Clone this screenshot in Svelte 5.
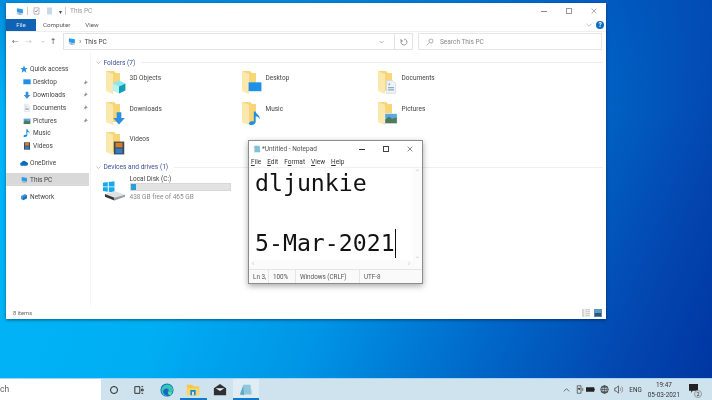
<script>
	const quick = [
		{ name: 'Desktop', icon: 'desktop' },
		{ name: 'Downloads', icon: 'downloads' },
		{ name: 'Documents', icon: 'documents' },
		{ name: 'Pictures', icon: 'pictures' }
	];
	const libs = [
		{ name: 'Music', icon: 'music' },
		{ name: 'Videos', icon: 'videos' }
	];
	const folders = [
		{ name: '3D Objects', icon: 'objects' },
		{ name: 'Desktop', icon: 'desktop' },
		{ name: 'Documents', icon: 'documents' },
		{ name: 'Downloads', icon: 'downloads' },
		{ name: 'Music', icon: 'music' },
		{ name: 'Pictures', icon: 'pictures' },
		{ name: 'Videos', icon: 'videos' }
	];
</script>

{#snippet glyph(kind)}
	{#if kind === 'desktop'}
		<path d="M1 4h22v15H1z" fill="#1e90ea" />
		<path d="M1 19h22v2H1z" fill="#d5e6f2" />
	{:else if kind === 'downloads'}
		<path d="M8 2h8v10h6L12 23 2 12h6z" fill="#2f8fe0" />
	{:else if kind === 'documents'}
		<path d="M4 1h11l5 5v17H4z" fill="#eef2f5" stroke="#c9d2d8" />
		<path d="M7 12h10v2H7zM7 16h10v2H7z" fill="#8fa9bd" />
		<path d="M8 5l3 2-3 3z" fill="#5aa5e0" />
	{:else if kind === 'pictures'}
		<path d="M1 4h22v18H1z" fill="#e8f3fa" />
		<path d="M2 5h20v8H2z" fill="#5aa8e0" />
		<path d="M2 14l6-4 6 3 8-2v10H2z" fill="#4d7a5a" />
	{:else if kind === 'music'}
		<path d="M10 1h3c1 5 8 6 7 13-1-3-4-5-7-5v10c0 3-3 5-7 5s-5-2-4-4 5-3 8-2z" fill="#1b8fe6" />
	{:else if kind === 'videos'}
		<path d="M3 1h18v22H3z" fill="#3f4a52" />
		<path d="M6 3h12v8H6z" fill="#d97b2f" />
		<path d="M6 13h12v8H6z" fill="#2f7fc8" />
	{:else if kind === 'objects'}
		<path d="M12 1l11 5-11 5L1 6z" fill="#8ce8ee" />
		<path d="M1 6l11 5v12L1 18z" fill="#bdf2f4" />
		<path d="M23 6l-11 5v12l11-5z" fill="#0f9fb5" />
	{/if}
{/snippet}

{#snippet small(kind)}
	<svg class="nav-icon" viewBox="0 0 24 24">{@render glyph(kind)}</svg>
{/snippet}

{#snippet pc(cls)}
	<svg class={cls} viewBox="0 0 24 24">
		<path d="M5 3l16 3v11L5 14z" fill="#2d9be8" />
		<path d="M3 17l10-1 9 3-10 2z" fill="#9fb4c4" />
	</svg>
{/snippet}

{#snippet pin()}
	<svg class="pin" viewBox="0 0 10 10"><path d="M5 1l4 4-2 .5-1.500 1.500-.5 1.500-3-3 1.500-.5L5 3.500zM3 7L1 9" fill="#8a8f94" stroke="#8a8f94" stroke-width=".6" /></svg>
{/snippet}

<div class="screen">
	<div class="desktop">
		<section class="explorer">
			<div class="titlebar">
				{@render pc('qa-pc')}
				<span class="sep"></span>
				<svg class="qa" viewBox="0 0 10 10"><path d="M1.500.5h7v9h-7z" fill="#fff" stroke="#8d99a3" /><path d="M3 5l1.500 1.500L7 3" fill="none" stroke="#d8452c" /></svg>
				<svg class="qa qa-doc" viewBox="0 0 10 10"><path d="M1.500 0h7v10h-7z" fill="#c7d8ee" /></svg>
				<span class="caret">▾</span>
				<span class="sep"></span>
				<span class="win-title">This PC</span>
				<div class="caption">
					<span class="cap min"></span>
					<span class="cap max"></span>
					<svg class="cap-x" viewBox="0 0 10 10"><path d="M1 1l8 8M9 1l-8 8" stroke="#777" fill="none" /></svg>
				</div>
			</div>
			<div class="ribbon">
				<span class="tab file">File</span>
				<span class="tab computer">Computer</span>
				<span class="tab">View</span>
				<svg class="ribbon-chev" viewBox="0 0 10 6"><path d="M1 1l4 4 4-4" fill="none" stroke="#9a9a9a" /></svg>
				<span class="help">?</span>
			</div>
			<div class="navrow">
				<div class="nav-arrows">
					<span class="arrow">←</span>
					<span class="arrow off">→</span>
					<svg class="down" viewBox="0 0 10 6"><path d="M1 1l4 4 4-4" fill="none" stroke="#777" /></svg>
					<span class="arrow up">↑</span>
				</div>
				<div class="address">
					{@render pc('addr-pc')}
					<span class="crumb">›</span>
					<span class="addr-text">This PC</span>
					<svg class="addr-down" viewBox="0 0 10 6"><path d="M1 1l4 4 4-4" fill="none" stroke="#666" /></svg>
					<span class="refresh">
						<svg viewBox="0 0 12 12"><path d="M6 1.500a4.500 4.500 0 1 1-4 2.500M1.500 1.500v3h3" fill="none" stroke="#666" /></svg>
					</span>
				</div>
				<div class="search">
					<svg viewBox="0 0 12 12"><circle cx="7.500" cy="4.500" r="3" fill="none" stroke="#888" /><path d="M5 7l-4 4" stroke="#888" /></svg>
					<span>Search This PC</span>
				</div>
			</div>
			<div class="main">
				<nav class="sidebar">
					<div class="nav-item top">
						<svg class="nav-icon" viewBox="0 0 24 24"><path d="M12 1l3 8h8l-6 5 2 9-7-5-7 5 2-9-6-5h8z" fill="#2f8fe0" /></svg>
						<span>Quick access</span>
					</div>
					{#each quick as item}
						<div class="nav-item sub">
							{@render small(item.icon)}
							<span>{item.name}</span>
							{@render pin()}
						</div>
					{/each}
					{#each libs as item}
						<div class="nav-item sub">
							{@render small(item.icon)}
							<span>{item.name}</span>
						</div>
					{/each}
					<div class="nav-item top gap">
						<svg class="nav-icon" viewBox="0 0 24 24"><path d="M6 20a5 5 0 0 1-1-10 7 7 0 0 1 13-1 5.500 5.500 0 0 1 1 11z" fill="#0f6cbd" /></svg>
						<span>OneDrive</span>
					</div>
					<div class="nav-item top gap selected">
						{@render pc('nav-icon')}
						<span>This PC</span>
					</div>
					<div class="nav-item top gap">
						<svg class="nav-icon" viewBox="0 0 24 24"><path d="M3 9l12-6 6 4v9l-12 6-6-4z" fill="#3f9be0" /><path d="M9 12l12-5v9l-12 6z" fill="#1f74bd" /></svg>
						<span>Network</span>
					</div>
				</nav>
				<div class="content">
					<div class="group-head">
						<svg viewBox="0 0 10 6"><path d="M1 1l4 4 4-4" fill="none" stroke="#8a8f94" /></svg>
						<span>Folders (7)</span>
						<i></i>
					</div>
					<div class="folders">
						{#each folders as f}
							<div class="tile">
								<svg class="folder" viewBox="0 0 20 24">
									<path d="M0 1h8l2 2h4v18H0z" fill="#f6d679" />
									<path d="M0 1l7 3v20l-7-3z" fill="#fbe8ac" />
									<svg x="6" y="10" width="14" height="14" viewBox="0 0 24 24">{@render glyph(f.icon)}</svg>
								</svg>
								<span class="tile-name">{f.name}</span>
							</div>
						{/each}
					</div>
					<div class="group-head devices">
						<svg viewBox="0 0 10 6"><path d="M1 1l4 4 4-4" fill="none" stroke="#8a8f94" /></svg>
						<span>Devices and drives (1)</span>
						<i></i>
					</div>
					<div class="drive">
						<svg class="drive-icon" viewBox="0 0 24 20">
							<path d="M0 1.500l5-.8v4.600H0zM6 .6l6-.9v5.600H6zM0 6.200h5v4.600l-5-.7zM6 6.200h6v5.500l-6-.8z" fill="#18a8ec" />
							<path d="M2 13l10-3 11 4-11 3z" fill="#dfe1e3" />
							<path d="M2 13l10 4v3L2 16z" fill="#34373a" />
							<path d="M12 17l11-3v2l-11 4z" fill="#9a9fa3" />
						</svg>
						<div class="drive-info">
							<span class="drive-name">Local Disk (C:)</span>
							<div class="bar"><div class="fill" style="width: {(27 / 465) * 100}%"></div></div>
							<span class="drive-free">438 GB free of 465 GB</span>
						</div>
					</div>
				</div>
			</div>
			<div class="statusbar">
				<span>8 items</span>
				<div class="views">
					<svg viewBox="0 0 10 10"><path d="M0 0h3v10H0z" fill="#d5d5d5" /><path d="M4 1h6M4 3.500h6M4 6h6M4 8.500h6" stroke="#a9a9a9" /></svg>
					<svg viewBox="0 0 10 10"><path d="M0 0h10v10H0z" fill="#5d95c4" /><path d="M1 5h8v4H1z" fill="#2f5673" /></svg>
				</div>
			</div>
		</section>

		<section class="notepad">
			<div class="np-title">
				<svg class="np-icon" viewBox="0 0 12 12"><path d="M2 1h8l1 10H3z" fill="#7fc3d8" /><path d="M2 1l1 10-1 .5L1 2z" fill="#b8c4cc" /></svg>
				<span>*Untitled - Notepad</span>
				<div class="np-caption">
					<span class="cap min dark"></span>
					<span class="cap max dark"></span>
					<svg class="cap-x" viewBox="0 0 10 10"><path d="M1 1l8 8M9 1l-8 8" stroke="#444" fill="none" /></svg>
				</div>
			</div>
			<div class="np-menu">
				<span><u>F</u>ile</span><span><u>E</u>dit</span><span>F<u>o</u>rmat</span><span><u>V</u>iew</span><span><u>H</u>elp</span>
			</div>
			<div class="np-body">
				<div class="np-text">
					<div>dljunkie</div>
					<div>&nbsp;</div>
					<div>5-Mar-2021<span class="cursor"></span></div>
				</div>
				<div class="np-vscroll"><span>⌃</span><span>⌄</span></div>
			</div>
			<div class="np-hscroll"><span>‹</span><span>›</span></div>
			<div class="np-status">
				<span class="s1">Ln 3,</span>
				<span class="s2">100%</span>
				<span class="s3">Windows (CRLF)</span>
				<span class="s4">UTF-8</span>
			</div>
		</section>
	</div>

	<footer class="taskbar">
		<div class="tb-search">ch</div>
		<div class="tb-icons">
			<span class="tb-btn"><span class="ring"></span></span>
			<span class="tb-btn view">
				<svg viewBox="0 0 12 12"><path d="M1 2h6v8H1zM9 2h2M9 5h2v2H9zM9 10h2" fill="none" stroke="#333" stroke-width="1.200" /></svg>
			</span>
			<span class="tb-btn">
				<svg class="big" viewBox="0 0 16 16"><circle cx="8" cy="8" r="7.500" fill="#1369c8" /><path d="M2 6c2-6 12-6 13 2 0 2-4 3-6 2 3-2-1-5-4-3-3 2-1 7 4 7-4 2-9-2-7-8z" fill="#37c6b0" /><path d="M9 10c3 1 6 0 6-2l-2 5c-2 2-4 1-4-3z" fill="#4fe08f" /></svg>
			</span>
			<span class="tb-btn open">
				<svg class="big" viewBox="0 0 16 16"><path d="M1 2h6l2 2h6v10H1z" fill="#f7c64a" /><path d="M1 6h14v8H1z" fill="#fbd75f" /><path d="M5 8h6v6H5z" fill="#1a86d8" /><path d="M7 10h2v4H7z" fill="#f7f0d4" /></svg>
			</span>
			<span class="tb-btn">
				<svg class="big" viewBox="0 0 16 16"><path d="M1 6l7-5 7 5v8H1z" fill="#2c2f33" /><path d="M3 6h10l-5 3z" fill="#f2f2f2" /></svg>
			</span>
			<span class="tb-btn active">
				<svg class="big" viewBox="0 0 16 16"><path d="M5 2h8l2 11H6z" fill="#8fc7dc" /><path d="M5 2L1 13l5 1z" fill="#5fa9c8" /><path d="M13 2l2 11-1 1z" fill="#cfd6da" /></svg>
			</span>
		</div>
		<div class="tray">
			<svg class="chev" viewBox="0 0 10 6"><path d="M1 5l4-4 4 4" fill="none" stroke="#333" /></svg>
			<svg viewBox="0 0 10 12"><path d="M2 1h5v10H2z" fill="none" stroke="#444" /><circle cx="4.500" cy="5" r="1.500" fill="#444" /><path d="M8 4h2v4H8z" fill="#888" /></svg>
			<svg class="bat" viewBox="0 0 12 8"><path d="M0 1h11v6H0z" fill="#222" /><path d="M11 3h1v2h-1z" fill="#222" /></svg>
			<svg viewBox="0 0 12 12"><circle cx="6" cy="6" r="5" fill="none" stroke="#222" /><path d="M1 6h10M6 1v10M2 3h8M2 9h8" stroke="#222" stroke-width=".7" /><ellipse cx="6" cy="6" rx="2.500" ry="5" fill="none" stroke="#222" stroke-width=".7" /></svg>
			<svg viewBox="0 0 12 12"><path d="M1 4h2l3-3v10L3 8H1z" fill="none" stroke="#444" /><path d="M8 4c1 1 1 3 0 4M10 2c2 2 2 6 0 8" fill="none" stroke="#777" /></svg>
			<span class="lang">ENG</span>
			<div class="clock"><span>19:47</span><span>05-03-2021</span></div>
			<span class="notify">
				<svg viewBox="0 0 12 12"><path d="M0 0h12v9H5l-2 3V9H0z" fill="#222" /></svg>
				<b>2</b>
			</span>
		</div>
	</footer>
</div>

<style>
	:global(body) {
		margin: 0;
	}

	.screen {
		width: 712px;
		height: 400px;
		display: flex;
		flex-direction: column;
		overflow: hidden;
		font-family: Roboto, "Noto Sans", sans-serif;
		filter: blur(0.4px);
	}

	.desktop {
		position: relative;
		flex: 1;
		background:
			linear-gradient(to bottom, rgba(0, 60, 170, 0.35), rgba(0, 60, 170, 0) 30%),
			linear-gradient(112deg, #01b7f9 0%, #00aef3 33%, #0095e6 52%, #0068c9 72%, #0344ae 90%, #0036a2 100%);
	}

	/* explorer window */
	.explorer {
		position: absolute;
		left: 6px;
		top: 3px;
		width: 600px;
		height: 316px;
		background: #fff;
		display: flex;
		flex-direction: column;
		box-shadow: 0 1px 3px rgba(0, 0, 0, 0.45);
		color: #333;
		font-size: 6.5px;
	}

	.titlebar {
		height: 16px;
		display: flex;
		align-items: center;
		padding-left: 9px;
		gap: 3px;
		flex: none;
	}

	.qa-pc,
	.addr-pc {
		width: 9px;
		height: 9px;
	}

	.qa {
		width: 7px;
		height: 8px;
		margin-left: 2px;
	}

	.qa-doc {
		margin-left: 3px;
	}

	.caret {
		font-size: 6px;
		color: #444;
		margin-left: 3px;
	}

	.sep {
		width: 1px;
		height: 8px;
		background: #ccc;
	}

	.win-title {
		color: #999;
		margin-left: 1px;
	}

	.caption {
		margin-left: auto;
		display: flex;
		align-items: center;
		gap: 19px;
		padding-right: 9px;
	}

	.cap {
		display: block;
		box-sizing: border-box;
	}

	.min {
		width: 6px;
		height: 1px;
		background: #888;
	}

	.max {
		width: 6px;
		height: 6px;
		border: 1px solid #999;
	}

	.cap-x {
		width: 6px;
		height: 6px;
	}

	.ribbon {
		height: 12px;
		display: flex;
		align-items: center;
		flex: none;
		border-bottom: 1px solid #eee;
	}

	.tab {
		color: #555;
		font-size: 6.2px;
	}

	.tab.computer {
		margin: 0 15px 0 7px;
	}

	.tab.file {
		width: 30px;
		text-align: center;
		background: #0f62b4;
		color: #dbe9f6;
		height: 12px;
		line-height: 12px;
	}

	.ribbon-chev {
		width: 6px;
		height: 4px;
		margin-left: auto;
	}

	.help {
		width: 8px;
		height: 8px;
		border-radius: 50%;
		background: #0f6cc0;
		color: #fff;
		font-size: 6.5px;
		font-weight: 700;
		line-height: 8px;
		text-align: center;
		margin: 0 2px 0 4px;
	}

	.navrow {
		height: 17px;
		margin: 1px 0;
		display: flex;
		align-items: center;
		flex: none;
		padding-right: 4px;
	}

	.nav-arrows {
		width: 57px;
		flex: none;
		display: flex;
		align-items: center;
		padding-left: 6px;
		box-sizing: border-box;
	}

	.arrow {
		font-family: "DejaVu Sans", sans-serif;
		font-size: 8px;
		color: #777;
		width: 14px;
	}

	.arrow.off {
		color: #ccc;
		width: 17px;
	}

	.arrow.up {
		color: #555;
		margin-left: 5px;
	}

	.down {
		width: 4px;
		height: 3px;
	}

	.address {
		width: 350px;
		flex: none;
		box-sizing: border-box;
		height: 17px;
		border: 1px solid #e2e2e2;
		display: flex;
		align-items: center;
		padding-left: 3px;
		gap: 3px;
		color: #444;
	}

	.crumb {
		font-size: 8px;
		color: #666;
	}

	.addr-down {
		width: 5px;
		height: 4px;
		margin-left: auto;
		margin-right: 7px;
	}

	.refresh {
		width: 17px;
		height: 15px;
		border-left: 1px solid #e2e2e2;
		display: flex;
		align-items: center;
		justify-content: center;
	}

	.refresh svg {
		width: 8px;
		height: 8px;
	}

	.search {
		margin-left: 5px;
		flex: 1;
		height: 17px;
		box-sizing: border-box;
		border: 1px solid #e6e6e6;
		display: flex;
		align-items: center;
		padding-left: 7px;
		gap: 6px;
		color: #888;
	}

	.search svg {
		width: 8px;
		height: 8px;
	}

	.main {
		flex: 1;
		display: flex;
		min-height: 0;
	}

	.sidebar {
		width: 84.500px;
		flex: none;
		box-sizing: border-box;
		padding-top: 12px;
		border-right: 1px solid #f5f5f5;
		color: #444;
	}

	.nav-item {
		height: 12.800px;
		display: flex;
		align-items: center;
		position: relative;
	}

	.nav-item.top {
		padding-left: 14px;
		gap: 2px;
	}

	.nav-item.sub {
		padding-left: 17px;
		gap: 2px;
	}

	.nav-item.gap {
		margin-top: 4px;
	}

	.selected {
		background: #d9d9d9;
		margin-right: 1px;
		height: 13px;
	}

	.nav-icon {
		width: 8px;
		height: 8px;
		flex: none;
	}

	.pin {
		position: absolute;
		right: 2px;
		width: 5px;
		height: 5px;
	}

	.content {
		flex: 1;
		padding: 7px 0 0 5px;
		min-width: 0;
	}

	.group-head {
		display: flex;
		align-items: center;
		gap: 3px;
		height: 9px;
		color: #3b4f9a;
		font-size: 6.600px;
	}

	.group-head svg {
		width: 5px;
		height: 3px;
	}

	.group-head i {
		flex: 1;
		height: 1px;
		background: #eee;
		margin: 0 3px;
	}

	.devices {
		margin-top: 2px;
	}

	.folders {
		display: grid;
		grid-template-columns: repeat(3, 136px);
		grid-auto-rows: 30.500px;
		margin-top: 2px;
		padding-left: 10px;
	}

	.tile {
		display: flex;
		align-items: flex-start;
		gap: 4px;
	}

	.folder {
		width: 20px;
		height: 24px;
		flex: none;
		margin-top: 1px;
	}

	.tile-name {
		margin-top: 5px;
		color: #444;
	}

	.drive {
		display: flex;
		margin-top: 3px;
		padding-left: 7px;
		gap: 4px;
	}

	.drive-icon {
		width: 23px;
		height: 20px;
		margin-top: 6px;
	}

	.drive-info {
		display: flex;
		flex-direction: column;
		width: 101px;
	}

	.drive-name {
		color: #444;
		height: 8px;
		line-height: 8px;
	}

	.bar {
		height: 8px;
		background: #e2e2e2;
		border: 1px solid #d8d8d8;
		box-sizing: border-box;
	}

	.fill {
		height: 100%;
		background: #26a0da;
	}

	.drive-free {
		color: #8a8a8a;
		margin-top: 2px;
	}

	.statusbar {
		height: 13px;
		flex: none;
		display: flex;
		align-items: center;
		justify-content: space-between;
		padding: 0 4px 0 7px;
		color: #666;
		font-size: 5.800px;
	}

	.views {
		display: flex;
		gap: 4px;
	}

	.views svg {
		width: 8px;
		height: 8px;
	}

	/* notepad window */
	.notepad {
		position: absolute;
		left: 248px;
		top: 140px;
		width: 175px;
		height: 144px;
		box-sizing: border-box;
		background: #fff;
		border: 1px solid #8c8c8c;
		box-shadow: 0 2px 6px rgba(0, 0, 0, 0.35);
		display: flex;
		flex-direction: column;
		font-size: 6.500px;
		color: #444;
	}

	.np-title {
		height: 14px;
		margin-top: 1px;
		display: flex;
		align-items: center;
		padding-left: 4px;
		gap: 1px;
		flex: none;
		color: #555;
	}

	.np-icon {
		width: 8px;
		height: 8px;
	}

	.np-caption {
		margin-left: auto;
		display: flex;
		align-items: center;
		gap: 18px;
		padding-right: 9px;
	}

	.dark.min {
		background: #333;
	}

	.dark.max {
		border-color: #444;
	}

	.np-menu {
		height: 11px;
		flex: none;
		display: flex;
		align-items: center;
		gap: 6px;
		padding-left: 2px;
		border-bottom: 1px solid #f0f0f0;
		color: #333;
	}

	.np-body {
		flex: 1;
		display: flex;
		min-height: 0;
	}

	.np-text {
		flex: 1;
		font-family: "DejaVu Sans Mono", monospace;
		font-size: 23.200px;
		line-height: 30px;
		color: #111;
		padding: 0 0 0 6px;
		white-space: nowrap;
		overflow: hidden;
	}

	.cursor {
		display: inline-block;
		width: 1px;
		height: 29px;
		background: #111;
		vertical-align: -7px;
	}

	.np-vscroll {
		width: 9px;
		flex: none;
		display: flex;
		flex-direction: column;
		justify-content: space-between;
		align-items: center;
		color: #bbb;
		font-size: 6px;
		background: #fbfbfb;
		line-height: 8px;
	}

	.np-hscroll {
		height: 9px;
		flex: none;
		display: flex;
		justify-content: space-between;
		padding: 0 12px 0 3px;
		color: #bbb;
		font-size: 7px;
		line-height: 9px;
		background: #fbfbfb;
	}

	.np-status {
		height: 14px;
		flex: none;
		display: flex;
		align-items: center;
		border-top: 1px solid #e5e5e5;
		color: #555;
		font-size: 6.300px;
		box-sizing: border-box;
		background: #fafafa;
	}

	.np-status span {
		box-sizing: border-box;
		height: 100%;
		display: flex;
		align-items: center;
		padding-left: 4px;
		border-right: 1px solid #e5e5e5;
	}

	.s1 {
		width: 20px;
	}

	.s2 {
		width: 27px;
	}

	.s3 {
		width: 64px;
	}

	.np-status .s4 {
		border-right: 0;
	}

	/* taskbar */
	.taskbar {
		height: 22px;
		flex: none;
		display: flex;
		align-items: stretch;
		background: #cfe3ee;
		border-top: 1px solid #a5d4ee;
		box-sizing: border-box;
		color: #222;
		font-size: 6.500px;
	}

	.tb-search {
		width: 101px;
		flex: none;
		background: #fff;
		color: #666;
		font-size: 8.500px;
		line-height: 21px;
	}

	.tb-icons {
		display: flex;
		flex: none;
	}

	.tb-btn {
		width: 26.400px;
		display: flex;
		align-items: center;
		justify-content: center;
		box-sizing: border-box;
		border-bottom: 2px solid transparent;
		padding-top: 2px;
	}

	.tb-btn svg {
		width: 10px;
		height: 10px;
	}

	.tb-btn.view svg {
		margin-right: 3px;
	}

	.tb-btn svg.big {
		width: 14px;
		height: 14px;
	}

	.tb-btn.open {
		border-bottom-color: #1479c9;
	}

	.tb-btn.active {
		border-bottom-color: #1479c9;
		background: #e0edf5;
	}

	.ring {
		width: 6px;
		height: 6px;
		border: 1.500px solid #222;
		border-radius: 50%;
	}

	.tray {
		margin-left: auto;
		display: flex;
		align-items: center;
		gap: 5px;
		padding-right: 13px;
	}

	.tray svg {
		width: 9px;
		height: 9px;
		flex: none;
	}

	.tray svg.chev {
		width: 7px;
		height: 4px;
	}

	.tray svg.bat {
		margin-left: -3px;
	}

	.lang {
		font-size: 6.300px;
		color: #333;
		margin-left: 1px;
	}

	.clock {
		display: flex;
		flex-direction: column;
		align-items: center;
		font-size: 6.400px;
		line-height: 10px;
		color: #333;
		margin: 0 4px 0 1px;
	}

	.notify {
		position: relative;
		width: 10px;
		height: 11px;
	}

	.notify b {
		position: absolute;
		right: -3px;
		bottom: -3px;
		width: 8px;
		height: 8px;
		border-radius: 50%;
		background: #d5dfe5;
		border: 1px solid #8d9aa3;
		box-sizing: border-box;
		font-size: 5.500px;
		line-height: 6px;
		text-align: center;
		font-weight: 400;
	}
</style>
